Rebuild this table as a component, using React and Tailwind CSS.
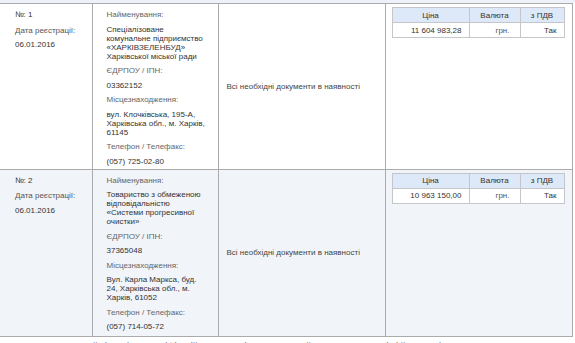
const bids = [
  {
    no: 1,
    date: "06.01.2016",
    name: ["Спеціалізоване", "комунальне підприємство", "«ХАРКІВЗЕЛЕНБУД»", "Харківської міської ради"],
    code: "03362152",
    address: ["вул. Клочківська, 195-А,", "Харківська обл., м. Харків,", "61145"],
    phone: "(057) 725-02-80",
    price: "11 604 983,28",
    bg: "bg-white",
    pad: "pt-[6px] pb-[3px]",
  },
  {
    no: 2,
    date: "06.01.2016",
    name: ["Товариство з обмеженою", "відповідальністю", "«Системи прогресивної", "очистки»"],
    code: "37365048",
    address: ["Вул. Карла Маркса, буд.", "24, Харківська обл., м.", "Харків, 61052"],
    phone: "(057) 714-05-72",
    price: "10 963 150,00",
    bg: "bg-[#f1f4f9]",
    pad: "pt-[6px] pb-[5px]",
  },
];

function Lines({ lines }) {
  return (
    <div className="text-[#333]">
      {lines.map((l) => (
        <div key={l} className="whitespace-nowrap">
          {l}
        </div>
      ))}
    </div>
  );
}

function PriceTable({ price }) {
  return (
    <table className="border-collapse w-[173px] table-fixed">
      <thead>
        <tr className="bg-[#dde9f8] h-[15px]">
          <th className="w-[77px] border border-[#c4c6c9] font-normal text-center text-[#333]">Ціна</th>
          <th className="w-[51px] border border-[#c4c6c9] font-normal text-center text-[#333]">Валюта</th>
          <th className="border border-[#c4c6c9] font-normal text-center text-[#333]">з ПДВ</th>
        </tr>
      </thead>
      <tbody>
        <tr className="bg-white h-[15px]">
          <td className="border border-[#c4c6c9] text-right pr-[7px] text-[#333]">{price}</td>
          <td className="border border-[#c4c6c9] text-right pr-[10px] text-[#555]">грн.</td>
          <td className="border border-[#c4c6c9] text-right pr-[7px] text-[#333]">Так</td>
        </tr>
      </tbody>
    </table>
  );
}

export default function App() {
  return (
    <div className="w-[575px] h-[343px] overflow-hidden bg-white font-['Liberation_Sans',Arial,sans-serif] text-[8px] leading-[9px] text-[#444]">
      <div className="h-[3px] bg-[#eef2f8]" />
      <table className="border-collapse table-fixed w-[573px]">
        <colgroup>
          <col className="w-[92px]" />
          <col className="w-[126px]" />
          <col className="w-[167px]" />
          <col />
        </colgroup>
        <tbody>
          {bids.map((b) => (
            <tr key={b.no} className={b.bg}>
              <td className="align-top border-t border-b border-r border-[#ababab] pl-[15px] pt-[6px]">
                <div className="flex flex-col gap-[5.5px] text-[#333]">
                  <div className="mb-[1px]">№: {b.no}</div>
                  <div className="text-[#555]">Дата реєстрації:</div>
                  <div>{b.date}</div>
                </div>
              </td>
              <td className={`align-top border border-[#ababab] pl-[14px] ${b.pad}`}>
                <div className="flex flex-col gap-[5.5px]">
                  <div className="text-[#666]">Найменування:</div>
                  <Lines lines={b.name} />
                  <div className="text-[#666]">ЄДРПОУ / ІПН:</div>
                  <div className="text-[#333]">{b.code}</div>
                  <div className="text-[#666]">Місцезнаходження:</div>
                  <Lines lines={b.address} />
                  <div className="text-[#666]">Телефон / Телефакс:</div>
                  <div className="text-[#333]">{b.phone}</div>
                </div>
              </td>
              <td className="align-middle border border-[#ababab] pl-[8px] text-[#444] whitespace-nowrap">
                Всі необхідні документи в наявності
              </td>
              <td className="align-top border border-[#ababab] pl-[6px] pt-[3px]">
                <PriceTable price={b.price} />
              </td>
            </tr>
          ))}
        </tbody>
      </table>
      <div className="pt-[4px] pl-[40px] text-[9px] leading-[11px] text-[#666] whitespace-nowrap">
        Учасник, який відповідає кваліфікаційним критеріям, визначений переможцем торгів і йому надіслано ...
      </div>
    </div>
  );
}
